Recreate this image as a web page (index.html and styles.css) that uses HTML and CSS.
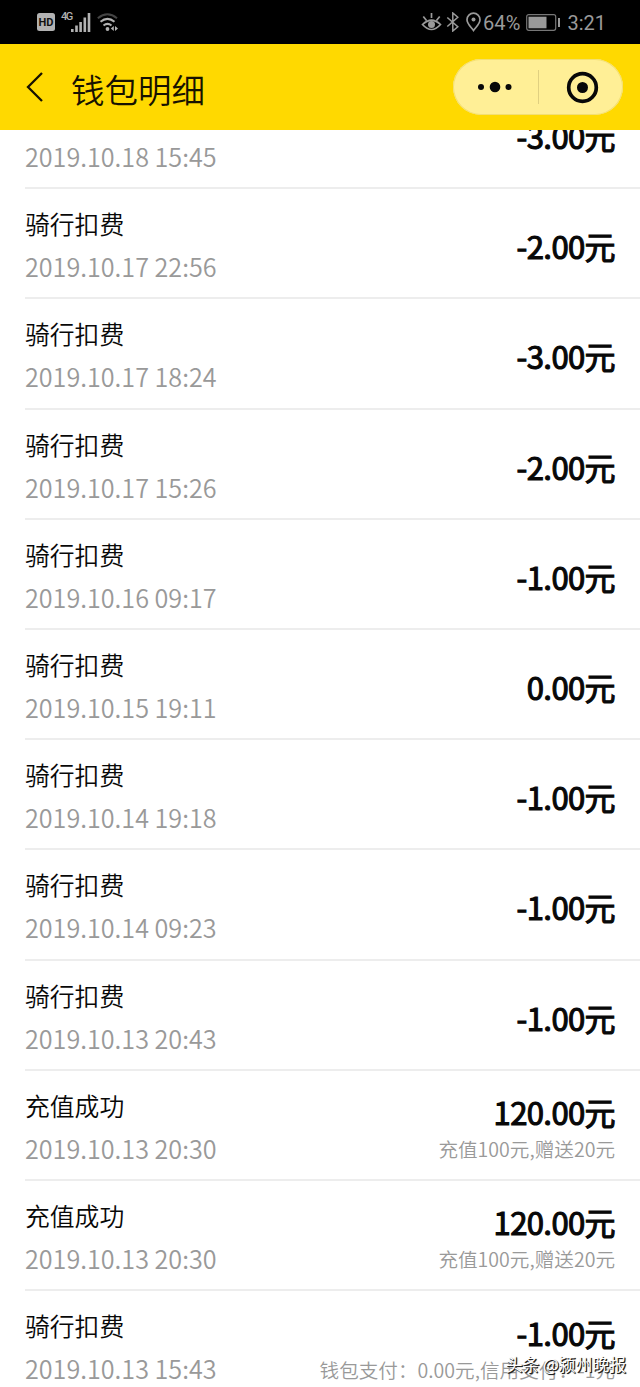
FILE: index.html
```html
<!DOCTYPE html>
<html lang="zh-CN">
<head>
<meta charset="utf-8">
<title>钱包明细</title>
<link rel="stylesheet" href="styles.css">
</head>
<body>
<div class="screen">
  <header class="status">
    <div class="status-left">
      <svg class="hd" width="18" height="18" viewBox="0 0 18 18"><rect width="18" height="18" rx="2.5" fill="#b2b2b2"/><text x="9" y="13" text-anchor="middle" textLength="15" lengthAdjust="spacingAndGlyphs">HD</text></svg>
      <span class="net">4G</span>
      <svg class="signal" width="20" height="19" viewBox="0 0 20 19" fill="#b2b2b2"><rect x="0" y="16" width="2.6" height="3"/><rect x="4.2" y="12.5" width="2.6" height="6.5"/><rect x="8.3" y="9" width="2.6" height="10"/><rect x="12.5" y="4.5" width="2.6" height="14.5"/><rect x="16.7" y="0" width="2.6" height="19"/></svg>
      <svg class="wifi" width="22" height="19" viewBox="0 0 22 19" fill="none" stroke="#b2b2b2" stroke-width="2"><path d="M.8 5.2Q10.4-2.6 20 5.2" stroke="#444"/><path d="M3.5 8.8q7-5.8 14 0M6.5 12.5q4-3.3 8 0"/><circle cx="10.5" cy="16" r="1.9" fill="#b2b2b2" stroke="none"/><path d="M16.8 13v5l-3-2.5zM18 13v5l3-2.5z" fill="#b2b2b2" stroke="none"/></svg>
    </div>
    <div class="status-right">
      <svg width="21" height="20" viewBox="0 0 21 20" fill="none" stroke="#9a9a9a" stroke-width="1.7"><path d="M1.500 12.500q9-8.500 18 0-9 10-18 0zM10.500 1v5M2.300 4.500l3.200 4M18.700 4.500l-3.200 4"/><circle cx="10.500" cy="12.500" r="3.500" fill="#9a9a9a" stroke="none"/></svg>
      <svg class="bt" width="14" height="20" viewBox="0 0 14 20" fill="none" stroke="#9a9a9a" stroke-width="1.500"><path d="M1.300 5.500l10.500 9.300L6.800 19V1l5 4.300L1.300 14.500"/></svg>
      <svg class="pin" width="15" height="20" viewBox="0 0 15 20" fill="none" stroke="#9a9a9a" stroke-width="1.700"><path d="M7.500 18.500C4.500 14.500 1 11.500 1 7.700a6.500 6.500 0 0 1 13 0c0 3.800-3.500 6.800-6.500 10.800z"/><circle cx="7.500" cy="7.500" r="2" fill="#9a9a9a" stroke="none"/></svg>
      <span class="pct">64%</span>
      <svg class="battery" width="35" height="17" viewBox="0 0 35 17"><rect x=".7" y=".7" width="29" height="15.600" rx="2" fill="none" stroke="#777" stroke-width="1.200"/><rect x="2.500" y="2.700" width="18" height="11.600" fill="#9a9a9a"/><rect x="32" y="4" width="2" height="9" fill="#9a9a9a"/></svg>
      <span class="clock">3:21</span>
    </div>
  </header>
  <nav class="nav">
    <svg class="back" width="18" height="30" viewBox="0 0 18 30" fill="none" stroke="#171200" stroke-width="2.300"><path d="M16 1L2 15l14 14"/></svg>
    <h1 class="title">钱包明细</h1>
    <div class="capsule">
      <svg width="170" height="56" viewBox="0 0 170 56"><g fill="#080808"><circle cx="28" cy="28" r="3"/><circle cx="42" cy="28" r="5.300"/><circle cx="55.500" cy="28" r="3"/><circle cx="129.500" cy="28.500" r="5.500"/></g><path d="M85.500 11v34" stroke="#e0d080"/><circle cx="129.500" cy="28.500" r="13.800" fill="none" stroke="#080808" stroke-width="3.700"/></svg>
    </div>
  </nav>
  <main class="viewport">
    <ul class="list">
      <li class="row"><div class="info"><p class="name">骑行扣费</p><p class="date">2019.10.18 15:45</p></div><div class="sum"><p class="amount">-3.00元</p></div></li>
      <li class="row"><div class="info"><p class="name">骑行扣费</p><p class="date">2019.10.17 22:56</p></div><div class="sum"><p class="amount">-2.00元</p></div></li>
      <li class="row"><div class="info"><p class="name">骑行扣费</p><p class="date">2019.10.17 18:24</p></div><div class="sum"><p class="amount">-3.00元</p></div></li>
      <li class="row"><div class="info"><p class="name">骑行扣费</p><p class="date">2019.10.17 15:26</p></div><div class="sum"><p class="amount">-2.00元</p></div></li>
      <li class="row"><div class="info"><p class="name">骑行扣费</p><p class="date">2019.10.16 09:17</p></div><div class="sum"><p class="amount">-1.00元</p></div></li>
      <li class="row"><div class="info"><p class="name">骑行扣费</p><p class="date">2019.10.15 19:11</p></div><div class="sum"><p class="amount">0.00元</p></div></li>
      <li class="row"><div class="info"><p class="name">骑行扣费</p><p class="date">2019.10.14 19:18</p></div><div class="sum"><p class="amount">-1.00元</p></div></li>
      <li class="row"><div class="info"><p class="name">骑行扣费</p><p class="date">2019.10.14 09:23</p></div><div class="sum"><p class="amount">-1.00元</p></div></li>
      <li class="row"><div class="info"><p class="name">骑行扣费</p><p class="date">2019.10.13 20:43</p></div><div class="sum"><p class="amount">-1.00元</p></div></li>
      <li class="row"><div class="info"><p class="name">充值成功</p><p class="date">2019.10.13 20:30</p></div><div class="sum"><p class="amount">120.00元</p><p class="note">充值100元,赠送20元</p></div></li>
      <li class="row"><div class="info"><p class="name">充值成功</p><p class="date">2019.10.13 20:30</p></div><div class="sum"><p class="amount">120.00元</p><p class="note">充值100元,赠送20元</p></div></li>
      <li class="row"><div class="info"><p class="name">骑行扣费</p><p class="date">2019.10.13 15:43</p></div><div class="sum"><p class="amount">-1.00元</p><p class="note">钱包支付：0.00元,信用支付：-1元</p></div></li>
    </ul>
  </main>
  <div class="watermark">头条 @颍州晚报</div>
</div>
</body>
</html>
```
FILE: styles.css
```css
* { box-sizing: border-box; }
body, h1, p, ul { margin: 0; padding: 0; }
body { background: #fff; font-family: "Noto Sans CJK SC", sans-serif; }
svg { display: block; flex: none; }
.screen { position: relative; width: 640px; height: 1387px; overflow: hidden; display: flex; flex-direction: column; }
.status { flex: none; height: 44px; background: #000; display: flex; justify-content: space-between; padding: 0 34px 0 37px; color: #9a9a9a; font-family: Roboto, sans-serif; }
.status-left, .status-right { display: flex; align-items: center; }
.hd text { font: bold 11px Roboto, sans-serif; fill: #111; }
.net { font-size: 11px; font-weight: 500; line-height: 12px; width: 10px; margin: 0 0 10px 6px; letter-spacing: -1.5px; color: #b2b2b2; }
.wifi { margin-left: 6px; }
.bt { margin-left: 4px; }
.pin { margin-left: 6px; }
.pct { font-size: 20px; letter-spacing: .1px; margin-left: 2px; padding-top: 1px; }
.battery { margin-left: 6px; }
.clock { font-size: 20px; margin-left: 6px; padding-top: 1px; }
.nav { flex: none; height: 86px; background: #ffd900; display: flex; align-items: center; padding: 0 17px 0 26px; }
.title { font-size: 33.500px; font-weight: 350; line-height: 40px; margin: 3px 0 0 27px; color: #171200; }
.capsule { margin-left: auto; width: 170px; height: 56px; border-radius: 28px; background: #ffef96; box-shadow: inset 0 0 0 1px #f3df72; }
.viewport { flex: 1; min-height: 0; overflow: hidden; }
.list { list-style: none; margin-top: -51px; padding-left: 25px; }
.row { height: 110.200px; border-bottom: 2px solid #ededed; display: flex; justify-content: space-between; align-items: center; padding: 4px 25px 0 0; }
.name { font-size: 24.800px; line-height: 43px; font-weight: 350; color: #080808; }
.date { font-size: 25.150px; line-height: 43px; font-weight: 350; color: #999; }
.sum { text-align: right; }
.amount { font-size: 31px; font-weight: 400; line-height: 40px; padding-top: 2px; letter-spacing: -.600px; color: #080808; -webkit-text-stroke: 1.100px #080808; }
.note { font-size: 19.600px; font-weight: 350; line-height: 34px; margin-bottom: -3px; color: #999; white-space: nowrap; }
.watermark { position: absolute; right: 14px; bottom: 11px; font-size: 16.800px; line-height: 24px; color: #fff; text-shadow: 1px 1px 0 #222, 1px 1px 1px #000; }
```
